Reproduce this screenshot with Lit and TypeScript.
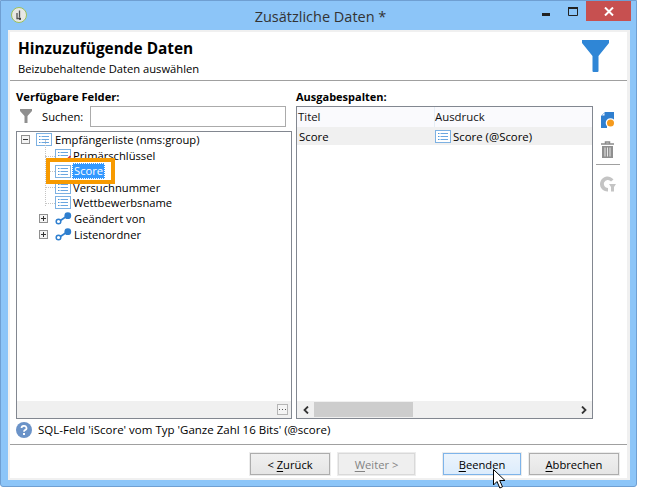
import { LitElement, html, css, svg } from "lit";
import { customElement } from "lit/decorators.js";

const listIcon = (key = false) => html`<svg class="li" width="16" height="13" viewBox="0 0 16 13">
  <rect x=".5" y=".5" width="15" height="12" fill="#fff" stroke="#7db1e2"/>
  <path d="M3 3.5h1.5M3 6.5h1.5M3 9.5h1.5" stroke="#4d96dc"/>
  <path d="M5.5 3.5H13M5.5 6.5H13M5.5 9.5H13" stroke="#6aa6e0"/>
  ${key ? svg`<path d="M11 11.5 15.5 7" stroke="#d8323c" stroke-width="1.6"/>` : ""}
</svg>`;

const linkIcon = html`<svg class="lk" width="17" height="13" viewBox="0 0 17 13">
  <path d="M4 9.5 12 4" stroke="#2f7fcf" stroke-width="1.6"/>
  <circle cx="3.5" cy="9.5" r="2.3" fill="#fff" stroke="#2f7fcf" stroke-width="1.5"/>
  <circle cx="12.8" cy="3.7" r="3.4" fill="#2f7fcf"/>
</svg>`;

const expander = (open: boolean) => html`<svg class="ex" width="9" height="9" viewBox="0 0 9 9">
  <rect x=".5" y=".5" width="8" height="8" fill="#f4f4f4" stroke="#8f8f8f"/>
  <path d="${open ? "M2 4.5h5" : "M2 4.5h5M4.5 2v5"}" stroke="#333"/>
</svg>`;

@customElement("app-root")
export class AppRoot extends LitElement {
  static styles = css`
    :host { display: block; width: 655px; height: 503px; background: #fff; overflow: hidden; position: relative;
      font-family: "Open Sans", "Noto Sans", sans-serif; font-size: 11.2px; color: #000; }
    * { box-sizing: border-box; }
    .win { width: 637px; height: 487px; background: #8cc5f8; border: 1px solid #6f9fd2;
      border-radius: 0 0 3px 3px; padding: 0 6px 6px 7px; display: flex; flex-direction: column; }
    .tb { height: 29px; flex: none; display: grid; grid-template-columns: 1fr auto 1fr; align-items: start; }
    .appicon { margin: 6px 0 0 3px; display: block; }
    .ttl { font-size: 14.5px; line-height: 29px; color: #333; margin-top: 1px; padding-left: 3px; }
    .ctl { justify-self: end; display: flex; align-items: flex-start; margin-right: -1px; }
    .ctl svg { display: block; }
    .min { margin: 12px 18px 0 0; }
    .max { margin: 6px 8px 0 0; }
    .close { width: 45px; height: 20px; background: #c75050; display: flex; align-items: center; justify-content: center; }
    .panel { flex: 1; background: #fff; border: solid #f0f0f0; border-width: 2px 3px 2px 2px; display: flex; flex-direction: column; min-height: 0; }
    .hdr { height: 49px; flex: none; padding: 8px 18px 0 8px; display: flex; justify-content: space-between; border-bottom: 1px solid #a0a0a0; }
    .h1 { font-size: 15.4px; font-weight: 700; line-height: 18px; }
    .h2 { line-height: 16px; margin-top: 3px; }
    .funnel { display: block; }
    .main { height: 338px; flex: none; padding: 8px 0 0 6px; display: grid; grid-template-columns: 276px 297px 34px; column-gap: 4px; }
    .col { display: flex; flex-direction: column; min-width: 0; }
    .lab { font-weight: 700; line-height: 15px; height: 16px; }
    .lab2 { font-size: 11px; }
    .search { display: flex; align-items: center; height: 22px; }
    .search .gf { margin: 0 10px 0 4px; display: block; }
    .search span { width: 42px; }
    .search input { margin-left: 6px; width: 196px; height: 21px; border: 1px solid #ababab; background: #fff; outline: none; }
    .tree { margin-top: 4px; height: 288px; width: 276px; border: 1px solid #828790; display: flex; flex-direction: column; }
    .rows { flex: 1; position: relative; }
    .row { height: 15.75px; display: flex; align-items: center; white-space: nowrap; }
    .r0 { padding-left: 4px; }
    .r0 .li { margin-left: 6px; margin-right: 3px; }
    .r1 { padding-left: 38px; position: relative; }
    .r1 .li { margin-right: 2px; }
    .r1::before { content: ""; position: absolute; left: 28px; width: 10px; top: 50%; border-top: 1px dotted #c4c4c4; }
    .r2 { padding-left: 22px; }
    .r2 .lk { margin-left: 7px; margin-right: 2px; }
    .sel { background: #3399ff; color: #fff; outline: 1px dotted #fff; outline-offset: -1px; padding: 0 2px; margin-left: -1px; height: 16px; line-height: 15px; }
    .vline { position: absolute; left: 28px; top: 8px; height: 66px; border-left: 1px dotted #c4c4c4; }
    .status { height: 17px; background: #f0f0f0; display: flex; justify-content: flex-end; align-items: center; padding-right: 3px; flex: none; }
    .more { width: 11px; height: 11px; border: 1px solid #b5b5b5; background: #f4f4f4; display: flex; align-items: center; justify-content: center; }
    .table { height: 313px; width: 297px; margin-top: 1px; border: 1px solid #828790; display: flex; flex-direction: column; font-size: 11.4px; }
    .grid { display: grid; grid-template-columns: 137px 1fr; }
    .th { height: 20px; line-height: 20px; padding-left: 1px; background: #fafafd; color: #111; }
    .th + .th { border-left: 1px solid #e6eef6; padding-left: 0; }
    .td { height: 18px; padding: 1px 0 0 2px; background: #f0f0f0; display: flex; align-items: center; }
    .td + .td { padding-left: 1px; }
    .td .li { margin: -1px 2px 0 0; }
    .spacer { flex: 1; }
    .hsb { height: 17px; background: #f0f0f0; display: flex; align-items: center; flex: none; }
    .hsb svg { display: block; }
    .arrow { width: 17px; height: 17px; display: flex; align-items: center; justify-content: center; flex: none; }
    .thumb { width: 99px; height: 15px; background: #cdcdcd; }
    .tools { display: flex; flex-direction: column; align-items: center; padding-top: 23px; margin-left: -2px; width: 25px; }
    .tools svg { display: block; }
    .tsep { width: 24px; border-top: 1px solid #a0a0a0; margin: 6px 0 11px; }
    .info { height: 26px; flex: none; padding: 0 0 3px 6px; display: flex; align-items: center; border-bottom: 1px solid #a0a0a0; font-size: 11.5px; }
    .info svg { margin-right: 6px; display: block; }
    .info span { line-height: 16px; }
    .btns { flex: 1; display: flex; padding: 8px 0 0 240px; align-items: flex-start; }
    button { font: inherit; height: 22px; border: 1px solid #adadad; background: linear-gradient(#f0f0f0, #e5e5e5); padding: 0; color: #000; box-shadow: 0 0 0 1px #ececec; }
    button u { text-underline-offset: 2px; }
    .b1 { width: 80px; }
    .b2 { width: 77px; margin-left: 8px; border-color: #d9d9d9; background: #efefef; color: #838383; }
    .b3 { width: 78px; margin-left: 28px; border-color: #7eb4ea; background: linear-gradient(#ecf4fc, #dcecfc); }
    .b4 { width: 90px; margin-left: 8px; }
    .hl { position: absolute; left: 46px; top: 158px; width: 69px; height: 26px; border: 4px solid #f79a00; pointer-events: none; }
    .cursor { position: absolute; left: 493px; top: 469px; display: block; }
  `;

  render() {
    return html`
      <div class="win">
        <div class="tb">
          <svg class="appicon" width="16" height="16" viewBox="0 0 16 16">
            <circle cx="8" cy="8" r="7.5" fill="#e8e8e4" stroke="#9cc05a"/>
            <path d="M8.5 3.5v7M6 6v5.5h4" stroke="#555" stroke-width="1.3" fill="none"/>
            <circle cx="9" cy="12" r="1" fill="#333"/>
          </svg>
          <div class="ttl">Zusätzliche Daten *</div>
          <div class="ctl">
            <svg class="min" width="8" height="3" viewBox="0 0 8 3"><rect width="8" height="3" fill="#222"/></svg>
            <svg class="max" width="10" height="9" viewBox="0 0 10 9"><path d="M.5 1h9v7.5h-9z" fill="none" stroke="#222"/><path d="M0 1h10" stroke="#222" stroke-width="2"/></svg>
            <div class="close"><svg width="10" height="9" viewBox="0 0 10 9"><path d="M1 .5 9 8.5M9 .5 1 8.5" stroke="#fff" stroke-width="2"/></svg></div>
          </div>
        </div>
        <div class="panel">
          <div class="hdr">
            <div>
              <div class="h1">Hinzuzufügende Daten</div>
              <div class="h2">Beizubehaltende Daten auswählen</div>
            </div>
            <svg class="funnel" width="27" height="32" viewBox="0 0 27 32"><path d="M0 0h27v3L16.500 16V31a1 1 0 0 1-1 1h-4a1 1 0 0 1-1-1V16L0 3z" fill="#2f86d6"/></svg>
          </div>
          <div class="main">
            <div class="col">
              <div class="lab">Verfügbare Felder:</div>
              <div class="search">
                <svg class="gf" width="12" height="14" viewBox="0 0 12 14"><path d="M0 0h12v2L7.500 7v7h-3V7L0 2z" fill="#8f8f8f"/></svg>
                <span>Suchen:</span>
                <input type="text" />
              </div>
              <div class="tree">
                <div class="rows">
                  <div class="vline"></div>
                  <div class="row r0">${expander(true)}${listIcon()}Empfängerliste (nms:group)</div>
                  <div class="row r1">${listIcon(true)}Primärschlüssel</div>
                  <div class="row r1">${listIcon()}<span class="sel">Score</span></div>
                  <div class="row r1">${listIcon()}Versuchnummer</div>
                  <div class="row r1">${listIcon()}Wettbewerbsname</div>
                  <div class="row r2">${expander(false)}${linkIcon}Geändert von</div>
                  <div class="row r2">${expander(false)}${linkIcon}Listenordner</div>
                </div>
                <div class="status"><div class="more"><svg width="7" height="1" viewBox="0 0 7 1"><path d="M0 .5h7" stroke="#555" stroke-dasharray="1 2"/></svg></div></div>
              </div>
            </div>
            <div class="col">
              <div class="lab lab2">Ausgabespalten:</div>
              <div class="table">
                <div class="grid">
                  <div class="th">Titel</div><div class="th">Ausdruck</div>
                  <div class="td">Score</div><div class="td">${listIcon()}Score (@Score)</div>
                </div>
                <div class="spacer"></div>
                <div class="hsb">
                  <div class="arrow"><svg width="6" height="8" viewBox="0 0 6 8"><path d="M5 .5 1.500 4 5 7.500" fill="none" stroke="#333" stroke-width="1.800"/></svg></div>
                  <div class="thumb"></div>
                  <div class="spacer"></div>
                  <div class="arrow"><svg width="6" height="8" viewBox="0 0 6 8"><path d="M1 .5 4.500 4 1 7.500" fill="none" stroke="#333" stroke-width="1.800"/></svg></div>
                </div>
              </div>
            </div>
            <div class="tools">
              <svg width="14" height="16" viewBox="0 0 14 16">
                <path d="M4 0h9v8H6v8H0V4z" fill="#2f7fcf"/>
                <path d="M3.500 1 1 3.500h2.500z" fill="#fff"/>
                <circle cx="9.500" cy="11" r="4.800" fill="#fff"/>
                <circle cx="9.500" cy="11" r="3.500" fill="#f59a1c"/>
              </svg>
              <svg style="margin-top:13px" width="15" height="17" viewBox="0 0 15 17">
                <path d="M1 3h13M5.500 3V1h4v2" fill="none" stroke="#8a8a8a" stroke-width="1.500"/>
                <path d="M2 5h11v12H2z" fill="#8f8f8f"/>
                <path d="M5 6.500v9M7.500 6.500v9M10 6.500v9" stroke="#e8e8e8"/>
              </svg>
              <div class="tsep"></div>
              <svg width="16" height="16" viewBox="0 0 16 16">
                <path d="M13.500 3.500A7.500 7.500 0 1 0 8 15.500V12A4 4 0 1 1 11 5.500z" fill="#c4c4c4"/>
                <path d="M9 8h7l-2 3v4.500h-3V11z" fill="#c4c4c4"/>
              </svg>
            </div>
          </div>
          <div class="info">
            <svg width="16" height="16" viewBox="0 0 16 16"><circle cx="8" cy="8" r="8" fill="#6b93c8"/><path d="M5.500 6a2.500 2.200 0 1 1 3.500 2.100c-.7.4-1 .8-1 1.600" fill="none" stroke="#fff" stroke-width="1.700"/><rect x="7" y="11" width="2" height="2" fill="#fff"/></svg>
            <span>SQL-Feld 'iScore' vom Typ 'Ganze Zahl 16 Bits' (@score)</span>
          </div>
          <div class="btns">
            <button class="b1">&lt; <u>Z</u>urück</button>
            <button class="b2"><u>W</u>eiter &gt;</button>
            <button class="b3"><u>B</u>eenden</button>
            <button class="b4"><u>A</u>bbrechen</button>
          </div>
        </div>
      </div>
      <div class="hl"></div>
      <svg class="cursor" width="13" height="20" viewBox="0 0 13 20"><path d="M.5.500V16l3.500-3.500L6.800 19l2.700-1.200L6.700 11.500H12z" fill="#fff" stroke="#000"/></svg>
    `;
  }
}
